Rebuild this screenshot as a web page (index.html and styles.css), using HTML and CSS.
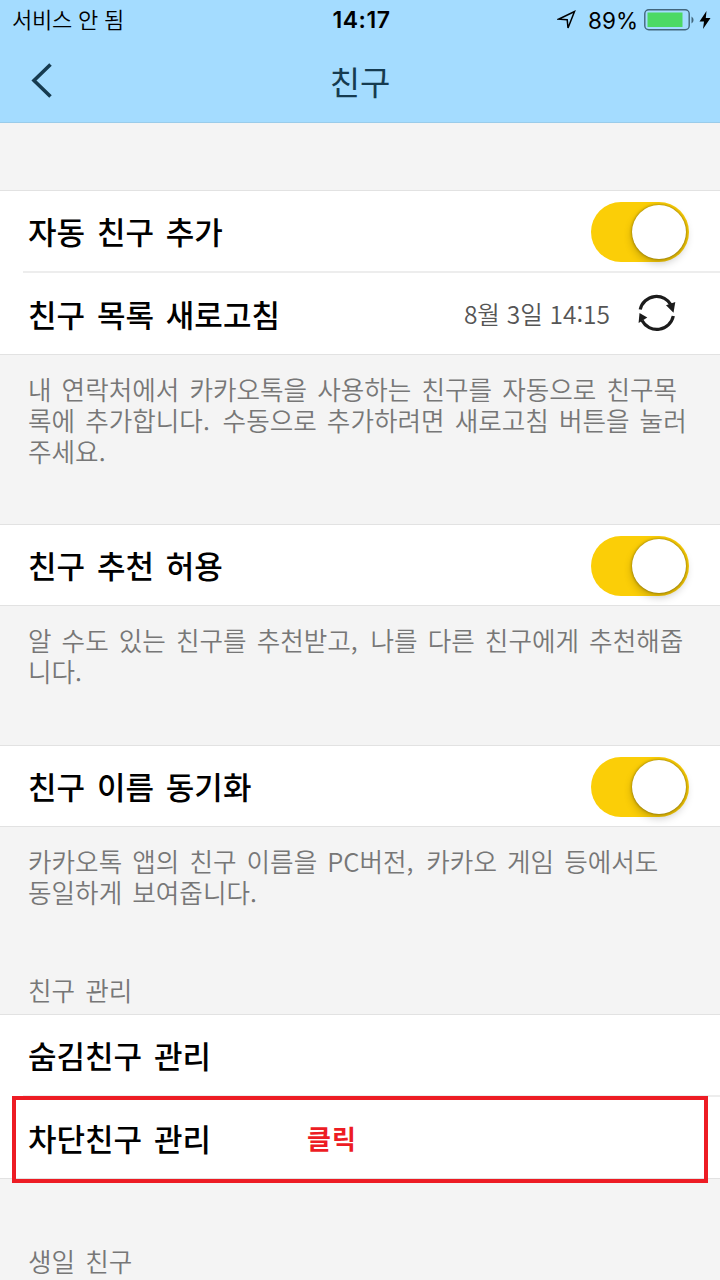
FILE: index.html
```html
<!DOCTYPE html>
<html lang="ko">
<head>
    <meta charset="UTF-8">
    <meta name="viewport" content="width=device-width, initial-scale=1.0">
    <title>친구</title>
    <link rel="stylesheet" href="styles.css">
</head>
<body>
    <header>
        <div class="status">
            <span class="carrier">서비스 안 됨</span>
            <span class="time">14:17</span>
            <div class="power">
                <svg class="location" width="20" height="20" viewBox="0 0 20 20">
                    <path d="M1.5 9.2 L17.5 1.5 L11 18 L10.2 9.8 Z" fill="none" stroke="#000" stroke-width="1.5"/>
                </svg>
                <span class="percent">89%</span>
                <svg class="battery" width="51" height="22" viewBox="0 0 51 22">
                    <rect x="0.8" y="0.8" width="44.4" height="20" rx="4" fill="none" stroke="#42667c" stroke-width="1.4"/>
                    <rect x="3.5" y="3.5" width="35" height="14.5" fill="#4cd964"/>
                    <path d="M47.5 7.5 a4 4 0 0 1 0 7 z" fill="#42667c"/>
                </svg>
                <svg class="bolt" width="12" height="20" viewBox="0 0 12 20">
                    <path d="M7.5 1 L0.5 11.5 H5 L4 19 L11.5 8 H6.8 Z" fill="#000"/>
                </svg>
            </div>
        </div>
        <div class="navbar">
            <svg class="back" width="22" height="36" viewBox="0 0 22 36">
                <path d="M19.5 1.5 L3 17.5 L19.5 33.5" fill="none" stroke="#163b50" stroke-width="3.6"/>
            </svg>
            <h1>친구</h1>
        </div>
    </header>
    <main>
        <ul class="list">
            <li class="row">
                <span class="label">자동 친구 추가</span>
                <span class="switch"></span>
            </li>
            <li class="row">
                <span class="label">친구 목록 새로고침</span>
                <span class="date">8월 3일 14:15</span>
                <svg class="refresh" width="40" height="40" viewBox="0 0 40 40">
                    <path d="M4.2 15.5 A16.8 16.8 0 0 1 35.5 11.5" fill="none" stroke="#1c1c1c" stroke-width="3.2"/>
                    <path d="M37.3 22 A16.8 16.8 0 0 1 6 26.5" fill="none" stroke="#1c1c1c" stroke-width="3.2"/>
                    <path d="M30 11.3 L39.3 8 L37.5 18.8 Z" fill="#1c1c1c"/>
                    <path d="M3.5 19 L11.3 23.6 L2.6 29 Z" fill="#1c1c1c"/>
                </svg>
            </li>
        </ul>
        <p class="note note-sync">내 연락처에서 카카오톡을 사용하는 친구를 자동으로 친구목<br>록에 추가합니다.&ensp;수동으로 추가하려면 새로고침 버튼을 눌러<br>주세요.</p>

        <ul class="list">
            <li class="row">
                <span class="label">친구 추천 허용</span>
                <span class="switch"></span>
            </li>
        </ul>
        <p class="note note-recommend">알 수도 있는 친구를 추천받고,&ensp;나를 다른 친구에게 추천해줍<br>니다.</p>

        <ul class="list">
            <li class="row">
                <span class="label">친구 이름 동기화</span>
                <span class="switch"></span>
            </li>
        </ul>
        <p class="note note-name">카카오톡 앱의 친구 이름을 PC버전,&ensp;카카오 게임 등에서도<br>동일하게 보여줍니다.</p>

        <h2>친구 관리</h2>
        <ul class="list">
            <li class="row">
                <span class="label">숨김친구 관리</span>
            </li>
            <li class="row">
                <span class="label">차단친구 관리</span>
                <span class="click">클릭</span>
                <div class="marker"></div>
            </li>
        </ul>
        <h2 class="birthday">생일 친구</h2>
    </main>
</body>
</html>
```
FILE: styles.css
```css
body {
    margin: 0;
    height: 1280px;
    overflow: hidden;
    background-color: #f4f4f4;
    font-family: "Noto Sans CJK KR", sans-serif;
    color: #000;
}

header {
    height: 123px;
    box-sizing: border-box;
    background-color: #a4dcff;
    border-bottom: 1px solid #9accea;
}

.status {
    display: grid;
    grid-template-columns: 1fr auto 1fr;
    align-items: center;
    height: 40px;
    padding: 0 9px 0 12px;
}

.carrier {
    height: 40px;
    font-size: 22px;
    line-height: 37px;
    font-weight: 350;
    letter-spacing: -0.2px;
}

.time {
    font-family: Inter, sans-serif;
    font-size: 23px;
    font-weight: 600;
    letter-spacing: 0.5px;
}

.power {
    display: flex;
    align-items: center;
    justify-content: flex-end;
}

.percent {
    font-family: Inter, sans-serif;
    font-size: 22.5px;
    margin: 0 6px 0 11px;
}

.bolt {
    margin-left: 4px;
}

.navbar {
    display: grid;
    grid-template-columns: 60px 1fr 60px;
    align-items: center;
    height: 82px;
}

.back {
    margin-left: 31px;
}

h1 {
    margin: 0;
    font-size: 33px;
    line-height: 80px;
    font-weight: 400;
    text-align: center;
    color: #163b50;
}

main {
    padding-top: 67px;
}

.list {
    list-style: none;
    margin: 0;
    padding: 0;
    background-color: #fff;
    border-top: 1px solid #e2e2e2;
    border-bottom: 1px solid #e2e2e2;
}

.row {
    position: relative;
    display: flex;
    align-items: center;
    height: 80px;
    padding: 0 31px 0 28px;
}

.row + .row {
    height: 81px;
    border-top: 2px solid #ededed;
    margin-left: 23px;
    padding-left: 5px;
}

.label {
    font-size: 31px;
    font-weight: 500;
    line-height: 80px;
    word-spacing: 3.2px;
    white-space: nowrap;
}

.switch {
    width: 98px;
    height: 60px;
    box-sizing: border-box;
    margin-top: 1px;
    margin-left: auto;
    padding: 3px 3px 3px 41px;
    border-radius: 30px;
    background-color: #fbce07;
}

.switch::before {
    content: "";
    display: block;
    width: 54px;
    height: 54px;
    border-radius: 50%;
    background-color: #fff;
    box-shadow: 0 4px 9px rgba(0, 0, 0, 0.22), 0 0 3px rgba(0, 0, 0, 0.45);
}

.date {
    margin-left: auto;
    font-size: 24.5px;
    font-weight: 350;
    color: #555;
}

.refresh {
    margin: 0 13px 0 26px;
}

.note {
    box-sizing: border-box;
    margin: 0;
    padding: 18px 0 0 28px;
    font-size: 25.6px;
    font-weight: 350;
    line-height: 31px;
    word-spacing: 2.9px;
    white-space: nowrap;
    color: #777;
}

.note-sync {
    height: 169px;
}

.note-recommend {
    height: 139px;
}

.note-name {
    height: 139px;
}

h2 {
    box-sizing: border-box;
    height: 48px;
    margin: 0;
    padding-left: 28px;
    font-size: 25.6px;
    font-weight: 350;
    line-height: 48px;
    word-spacing: 3px;
    color: #777;
}

.birthday {
    margin-top: 58px;
}

.click {
    margin-left: 96px;
    font-size: 26px;
    font-weight: 700;
    letter-spacing: 1px;
    color: #ed1c24;
}

/* red frame over the blocked friends row */
.marker {
    position: absolute;
    top: -1px;
    left: -11px;
    right: 12px;
    height: 87px;
    box-sizing: border-box;
    border: 4px solid #ed1c24;
}
```
